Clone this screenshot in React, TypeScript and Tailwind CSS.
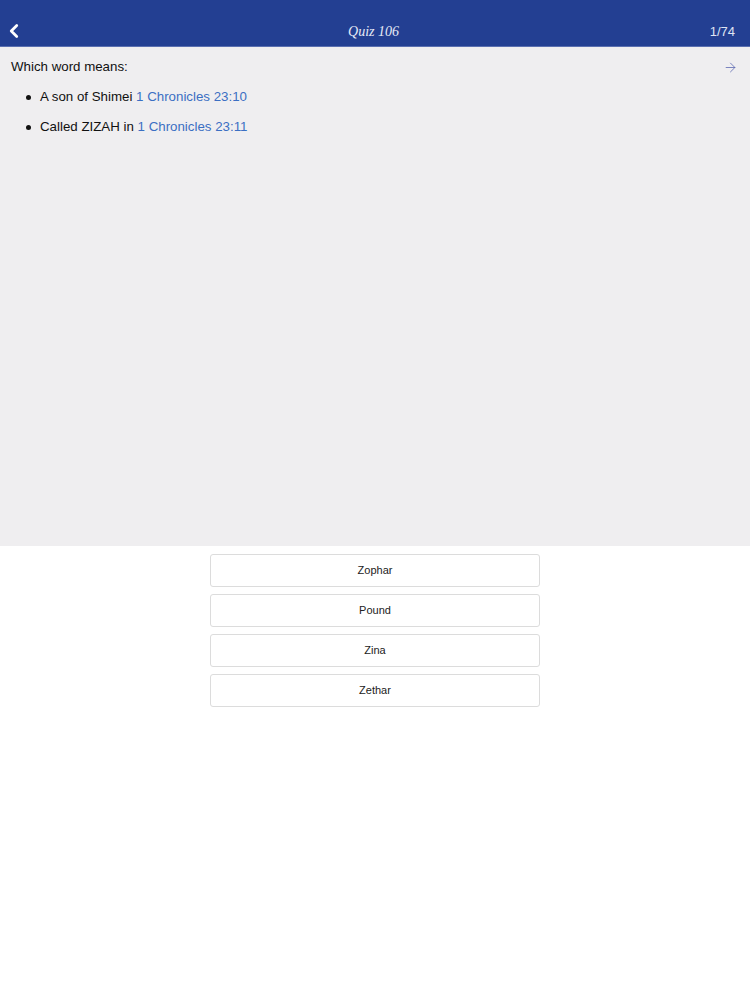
import { ArrowRight, ChevronLeft } from "lucide-react";

const answers = ["Zophar", "Pound", "Zina", "Zethar"];

export default function App() {
  return (
    <div className="flex min-h-[1000px] flex-col bg-white font-['Liberation_Sans',Arial,sans-serif]">
      {/* Header */}
      <header className="flex h-[47px] items-end border-b border-[#5a6fb0] bg-[#233f92] pb-[3px] pl-[3px] pr-[6px] text-white">
        <div className="flex w-[60px] items-center pb-[1px]">
          <ChevronLeft className="h-[22px] w-[22px]" strokeWidth={3} />
        </div>
        <div className="flex-1 text-center font-['Liberation_Serif',serif] text-[14px] italic leading-[22px] text-[#e6eaf6]">
          Quiz 106
        </div>
        <div className="w-[60px] pr-[9px] text-right text-[13px] leading-[22px] text-[#dfe4f3]">1/74</div>
      </header>

      {/* Question */}
      <section className="h-[499px] bg-[#efeef0] px-[11px] pt-[10px] text-[13.3px] leading-[20px] text-[#111]">
        <div className="flex items-center justify-between">
          <span>Which word means:</span>
          <ArrowRight className="mr-[1px] h-[15px] w-[15px] text-[#5a67b0]" strokeWidth={1.25} />
        </div>
        <ul className="mt-[10px] space-y-[10px] pl-[15px]">
          <li className="flex items-center gap-[9px]">
            <span className="h-[5px] w-[5px] rounded-full bg-[#111]" />
            <span>
              A son of Shimei <span className="text-[#3b6fc3]">1 Chronicles 23:10</span>
            </span>
          </li>
          <li className="flex items-center gap-[9px]">
            <span className="h-[5px] w-[5px] rounded-full bg-[#111]" />
            <span>
              Called ZIZAH in <span className="text-[#3b6fc3]">1 Chronicles 23:11</span>
            </span>
          </li>
        </ul>
      </section>

      {/* Answers */}
      <div className="flex flex-col items-center gap-[7px] pt-[8px]">
        {answers.map((a) => (
          <button
            key={a}
            className="h-[33px] w-[330px] rounded-[3px] border border-[#dcdcdc] bg-white text-[11px] text-[#222]"
          >
            {a}
          </button>
        ))}
      </div>
    </div>
  );
}
